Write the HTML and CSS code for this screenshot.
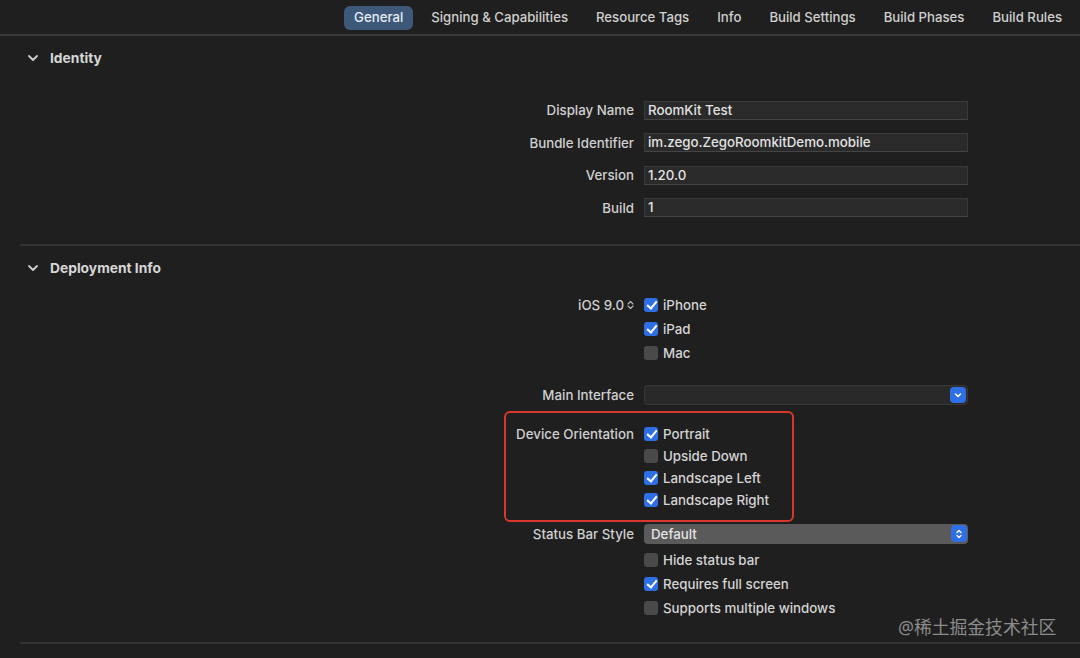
FILE: index.html
```html
<!DOCTYPE html>
<html>
<head>
<meta charset="utf-8">
<link rel="stylesheet" href="styles.css">
</head>
<body>
<div class="page">
  <div class="topbar">
    <div class="tabs">
      <span class="tab active">General</span>
      <span class="tab">Signing &amp; Capabilities</span>
      <span class="tab">Resource Tags</span>
      <span class="tab">Info</span>
      <span class="tab">Build Settings</span>
      <span class="tab">Build Phases</span>
      <span class="tab">Build Rules</span>
    </div>
  </div>

  <section class="section identity">
    <div class="sec-head">
      <svg class="chev" width="12" height="8" viewBox="0 0 12 8"><path d="M2 2 L6 6 L10 2" fill="none" stroke="#cfcfcf" stroke-width="1.8" stroke-linecap="round" stroke-linejoin="round"/></svg>
      <span class="sec-title">Identity</span>
    </div>
    <div class="form">
      <div class="row field-row"><span class="label">Display Name</span><div class="textfield">RoomKit Test</div></div>
      <div class="row field-row"><span class="label">Bundle Identifier</span><div class="textfield">im.zego.ZegoRoomkitDemo.mobile</div></div>
      <div class="row field-row"><span class="label">Version</span><div class="textfield">1.20.0</div></div>
      <div class="row field-row"><span class="label">Build</span><div class="textfield">1</div></div>
    </div>
  </section>

  <div class="sep"></div>

  <section class="section deploy">
    <div class="sec-head">
      <svg class="chev" width="12" height="8" viewBox="0 0 12 8"><path d="M2 2 L6 6 L10 2" fill="none" stroke="#cfcfcf" stroke-width="1.8" stroke-linecap="round" stroke-linejoin="round"/></svg>
      <span class="sec-title">Deployment Info</span>
    </div>
    <div class="form">
      <div class="group g-ios">
        <div class="row cb-row"><span class="label">iOS 9.0<svg class="updown" width="7" height="10" viewBox="0 0 7 10"><path d="M1 4 L3.5 1.5 L6 4 M1 6 L3.5 8.5 L6 6" fill="none" stroke="#bdbdbd" stroke-width="1.1" stroke-linecap="round" stroke-linejoin="round"/></svg></span><span class="cb on"></span><span class="cb-text">iPhone</span></div>
        <div class="row cb-row"><span class="label"></span><span class="cb on"></span><span class="cb-text">iPad</span></div>
        <div class="row cb-row"><span class="label"></span><span class="cb"></span><span class="cb-text">Mac</span></div>
      </div>

      <div class="row field-row r-main"><span class="label">Main Interface</span>
        <div class="popup empty"><span class="pop-text"></span>
          <span class="pop-btn"><svg width="10" height="8" viewBox="0 0 10 8"><path d="M2.5 3 L5 5.5 L7.5 3" fill="none" stroke="#fff" stroke-width="1.5" stroke-linecap="round" stroke-linejoin="round"/></svg></span>
        </div>
      </div>

      <div class="group g-orient">
        <div class="highlight"></div>
        <div class="row cb-row tight"><span class="label">Device Orientation</span><span class="cb on"></span><span class="cb-text">Portrait</span></div>
        <div class="row cb-row tight"><span class="label"></span><span class="cb"></span><span class="cb-text">Upside Down</span></div>
        <div class="row cb-row tight"><span class="label"></span><span class="cb on"></span><span class="cb-text">Landscape Left</span></div>
        <div class="row cb-row tight"><span class="label"></span><span class="cb on"></span><span class="cb-text">Landscape Right</span></div>
      </div>

      <div class="row field-row r-status"><span class="label">Status Bar Style</span>
        <div class="popup filled"><span class="pop-text">Default</span>
          <span class="pop-btn"><svg width="10" height="12" viewBox="0 0 10 12"><path d="M3 4.5 L5 2.5 L7 4.5 M3 7.5 L5 9.5 L7 7.5" fill="none" stroke="#fff" stroke-width="1.4" stroke-linecap="round" stroke-linejoin="round"/></svg></span>
        </div>
      </div>

      <div class="group g-status">
        <div class="row cb-row"><span class="label"></span><span class="cb"></span><span class="cb-text">Hide status bar</span></div>
        <div class="row cb-row"><span class="label"></span><span class="cb on"></span><span class="cb-text">Requires full screen</span></div>
        <div class="row cb-row"><span class="label"></span><span class="cb"></span><span class="cb-text">Supports multiple windows</span></div>
      </div>
    </div>
  </section>

  <div class="sep last"></div>
  <div class="watermark">@稀土掘金技术社区</div>
</div>
</body>
</html>
```

FILE: styles.css
```css
* { box-sizing: border-box; }
html, body {
  margin: 0;
  padding: 0;
  background: #1f1f1f;
}
body {
  font-family: Inter, "Noto Sans", "Noto Sans CJK SC", sans-serif;
  font-size: 13.3px;
  color: #d2d2d2;
  width: 1080px;
  height: 658px;
  overflow: hidden;
}
.page {
  position: relative;
  width: 1080px;
  height: 658px;
}
.topbar {
  height: 36px;
  border-bottom: 2px solid #3a3a3a;
  display: flex;
  justify-content: flex-end;
  align-items: flex-start;
  padding-top: 6px;
  padding-right: 8px;
}
.tabs {
  display: flex;
  gap: 8px;
}
.tab {
  height: 24px;
  line-height: 23px;
  padding: 0 10px;
  border-radius: 6px;
  font-weight: 500;
  font-size: 13.2px;
  color: #cfcfcf;
}
.tab.active {
  background: #3d5878;
  color: #e6edf5;
}
.sec-head {
  height: 24px;
  display: flex;
  align-items: center;
  padding-left: 27px;
  gap: 11px;
}
.identity .sec-head { margin-top: 10px; }
.deploy .sec-head { margin-top: 10px; }
.sec-title {
  font-weight: 700;
  font-size: 13.8px;
  color: #d6d6d6;
}
.form {
  display: flex;
  flex-direction: column;
}
.identity .form {
  margin-top: 30px;
  gap: 12.5px;
}
.row {
  display: flex;
  align-items: center;
  height: 20px;
}
.label {
  width: 634px;
  text-align: right;
  font-weight: 500;
  color: #cfcfcf;
  flex: none;
  display: flex;
  justify-content: flex-end;
  align-items: center;
  gap: 3px;
  margin-right: 10px;
}
.textfield {
  width: 324px;
  height: 19px;
  background: #2a2a2a;
  border: 1px solid #3b3b3b;
  border-bottom-color: #444;
  padding: 0 3px;
  line-height: 17px;
  color: #e2e2e2;
  font-weight: 500;
}
.sep {
  height: 2px;
  background: #343434;
  margin-left: 20px;
  margin-top: 26px;
}
.sep.last {
  margin-top: 24px;
}
.deploy .form { margin-top: 15px; }
.group {
  display: flex;
  flex-direction: column;
  gap: 4px;
}
.g-orient {
  position: relative;
  gap: 2px;
  margin-top: 19px;
}
.r-main { margin-top: 22px; }
.r-status { margin-top: 14px; }
.g-status { margin-top: 6px; }
.cb {
  width: 14px;
  height: 14px;
  border-radius: 3px;
  background: #4a4a4a;
  flex: none;
  margin-right: 5px;
  position: relative;
}
.cb.on {
  background: #2f6fe6;
}
.cb.on::after {
  content: "";
  position: absolute;
  left: 4.5px;
  top: 1.5px;
  width: 4px;
  height: 8px;
  border-right: 2px solid #fff;
  border-bottom: 2px solid #fff;
  transform: rotate(40deg);
}
.cb-text {
  font-weight: 500;
  color: #d4d4d4;
}
.popup {
  width: 324px;
  height: 20px;
  border-radius: 4px;
  display: flex;
  align-items: center;
  justify-content: space-between;
  padding: 0 1px 0 7px;
}
.popup.empty {
  background: #292929;
  border: 1px solid #383838;
}
.popup.filled {
  background: #5a5a5a;
}
.pop-text {
  font-weight: 500;
  color: #e4e4e4;
}
.pop-btn {
  width: 16px;
  height: 16px;
  border-radius: 4px;
  background: #2f6fe6;
  display: flex;
  align-items: center;
  justify-content: center;
}
.popup.filled .pop-btn { height: 17px; }
.highlight {
  position: absolute;
  left: 504px;
  top: -13px;
  width: 290px;
  height: 111px;
  border: 2.5px solid #d8372c;
  border-radius: 6px;
  pointer-events: none;
}
.watermark {
  position: absolute;
  left: 898px;
  top: 613px;
  font-size: 17.8px;
  color: #8c8c8c;
  font-family: "Noto Sans", "Noto Sans CJK SC", sans-serif;
  white-space: nowrap;
}
```
